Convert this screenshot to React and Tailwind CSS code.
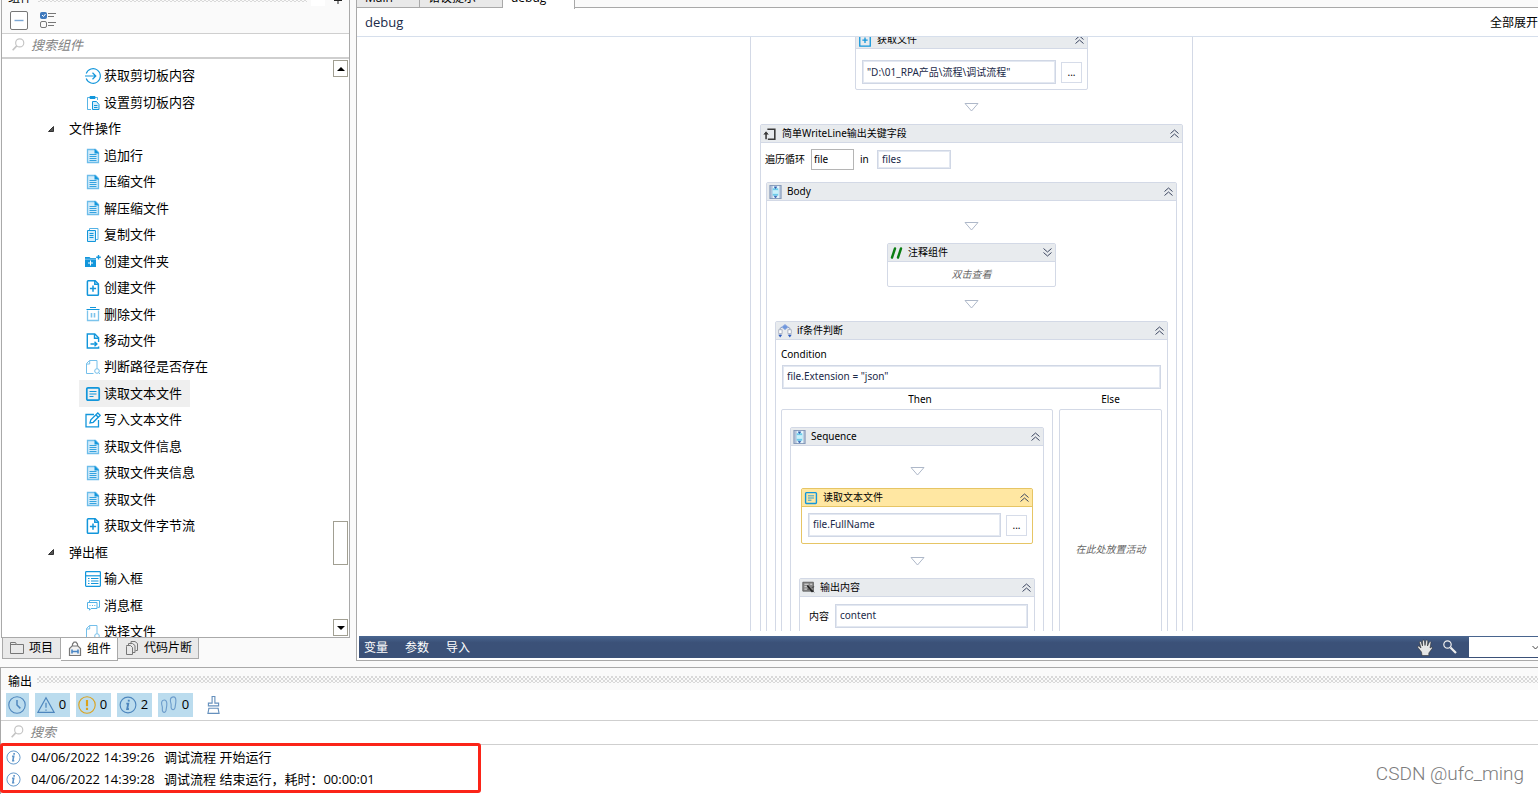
import { useState } from "react";
import { clsx } from "clsx";

const BLUE = "#1296db";

const Svg = ({ size = 16, children, ...rest }) => (
  <svg width={size} height={size} viewBox="0 0 16 16" fill="none" stroke={BLUE} aria-hidden="true" className="shrink-0" {...rest}>
    {children}
  </svg>
);

const icons = {
  arrowCircle: (
    <Svg>
      <path d="M1.2 5.5A7.3 7.3 0 1 1 1.2 10.5" strokeWidth="1.1" />
      <path d="M0 8h10.5M7.5 4.8 10.8 8 7.5 11.2" strokeWidth="1.2" />
    </Svg>
  ),
  paste: (
    <Svg>
      <path d="M6 14.5H2.5v-12H5M10 2.5h2.5V5" opacity="0.7" />
      <path d="M5 1.5h5v2H5z" fill={BLUE} />
      <path d="M7.5 6.5h4l2.5 3v5H7.5z" fill="#d5edfa" />
      <path d="M9 10.5h3.5M9 12.5h3.5" />
    </Svg>
  ),
  doc: (
    <Svg>
      <path d="M2.5 1.5h8l3 3v10h-11z" fill="#d3ecfa" stroke="#6dbdea" strokeWidth="1.3" />
      <path d="M9.5.8v4.700h4.700z" fill={BLUE} stroke="none" />
      <path d="M4.500 6.500h7M4.500 8.500h7M4.500 10.500h7M4.500 12.500h7" stroke="#35a3e0" />
    </Svg>
  ),
  copy: (
    <Svg>
      <path d="M4.5 3.5v-2h8.500v11h-2" stroke="#55b2e6" />
      <path d="M2.5 3.5h8v11h-8z" fill="#d3ecfa" />
      <path d="M4.5 6.5h4M4.5 8.5h4M4.5 10.5h4" />
    </Svg>
  ),
  folderPlus: (
    <Svg>
      <path d="M0 4h4.5l1 1H11v9H0z" fill={BLUE} stroke="none" />
      <path d="M0 6.2h11" stroke="#9dd3f2" strokeWidth="0.8" />
      <path d="M5.5 7.5v5M3 10h5" stroke="#fff" />
      <path d="M13.5 2v4.5M11.2 4.2h4.6" strokeWidth="1.4" />
    </Svg>
  ),
  docPlus: (
    <Svg strokeWidth="1.5">
      <path d="M3.2.8h7l3.2 3.2v10.4q0 .8-.8.8H3.2q-.8 0-.8-.8V1.600q0-.8.8-.8z" />
      <path d="M9.8 1v3.2h3.5" />
      <path d="M8 5.5v6.2M4.9 8.6h6.2" />
    </Svg>
  ),
  trash: (
    <Svg stroke="#7cc4ec">
      <path d="M5 1.5h6M1.5 3.500h13" stroke={BLUE} />
      <path d="M2.500 4.5v10h11v-10" strokeWidth="1.3" />
      <path d="M6.5 7v4.5M9.5 7v4.5" strokeWidth="1.6" />
    </Svg>
  ),
  docMove: (
    <Svg strokeWidth="1.4">
      <path d="M13.6 9V4.8L9.8 1H2.3v14h11.300v-1.5" />
      <path d="M9.5 1v4.2h4" />
      <path d="M5.5 11h6.2M9.5 8.7l2.4 2.3-2.4 2.3" />
    </Svg>
  ),
  docSearch: (
    <Svg stroke="#74bfea">
      <path d="M8.5 14.5h-7v-10l3-3h7.5v8M1.5 5h3.2V1.5" />
      <circle cx="12" cy="12" r="2.3" />
      <path d="m13.5 13.5 1.5 1.5" />
    </Svg>
  ),
  read: (
    <Svg>
      <rect x="1.8" y="1.8" width="12.4" height="12.4" rx="1.2" strokeWidth="1.7" />
      <path d="M4.5 5.5h7M4.5 8h7M4.5 10.5h4" />
    </Svg>
  ),
  write: (
    <Svg strokeWidth="1.3">
      <path d="M9 2.5H1v12.3h12.5V8" />
      <path d="m5 11 .8-3.2L12.8 1l2.4 2.3-7 7z" />
      <path d="m11 3 2.3 2.2" />
    </Svg>
  ),
  inputBox: (
    <Svg>
      <rect x=".6" y=".6" width="14.8" height="14.8" rx=".8" strokeWidth="1.2" />
      <path d="M.5 4.8h15" strokeWidth="1.2" />
      <path d="M3 7.5h1.5M3 10h1.5M3 12.5h1.5M6 7.5h7.5M6 10h7.5M6 12.5h7.5" />
    </Svg>
  ),
  message: (
    <Svg stroke="#55b2e6">
      <path d="M4.5 5V3.5h10v6.8h-2" />
      <path d="M2.5 5.5h9.5v6H6l-1.5 1.7v-1.7h-2z" fill="#fff" />
      <path d="M4.5 8.5h1M7 8.5h1M9.3 8.5h1" />
    </Svg>
  ),
};

const treeRows = [
  { label: "获取剪切板内容", icon: "arrowCircle" },
  { label: "设置剪切板内容", icon: "paste" },
  { label: "文件操作", group: true },
  { label: "追加行", icon: "doc" },
  { label: "压缩文件", icon: "doc" },
  { label: "解压缩文件", icon: "doc" },
  { label: "复制文件", icon: "copy" },
  { label: "创建文件夹", icon: "folderPlus" },
  { label: "创建文件", icon: "docPlus" },
  { label: "删除文件", icon: "trash" },
  { label: "移动文件", icon: "docMove" },
  { label: "判断路径是否存在", icon: "docSearch" },
  { label: "读取文本文件", icon: "read" },
  { label: "写入文本文件", icon: "write" },
  { label: "获取文件信息", icon: "doc" },
  { label: "获取文件夹信息", icon: "doc" },
  { label: "获取文件", icon: "doc" },
  { label: "获取文件字节流", icon: "docPlus" },
  { label: "弹出框", group: true },
  { label: "输入框", icon: "inputBox" },
  { label: "消息框", icon: "message" },
  { label: "选择文件", icon: "docSearch" },
];

const logs = [
  { time: "04/06/2022 14:39:26", text: "调试流程 开始运行" },
  { time: "04/06/2022 14:39:28", text: "调试流程 结束运行，耗时：00:00:01" },
];

const Grip = () => (
  <div className="h-[7px] flex-1 bg-[repeating-conic-gradient(#d9d9d9_0_25%,transparent_0_50%)] bg-[length:4px_4px]" />
);

const SearchBox = ({ label }) => (
  <div className="flex h-6 shrink-0 items-center gap-1.5 border-b border-[#cfcfcf] bg-white pb-0.5 pl-2.5">
    <Svg size={13} stroke="#c4c4c4" strokeWidth="1.4">
      <circle cx="9.5" cy="6" r="5" />
      <path d="M5.8 9.7.8 15" strokeWidth="2" />
    </Svg>
    <input
      type="text"
      aria-label={label}
      placeholder={label}
      className="min-w-0 flex-1 bg-transparent text-[13px] leading-5 italic outline-none placeholder:text-[#828282]"
    />
  </div>
);

const ScrollBar = () => (
  <div className="flex w-[15px] shrink-0 flex-col pt-px pb-px">
    <button type="button" aria-label="Scroll up" className="flex h-[17px] items-center justify-center border border-[#a19f92] bg-white">
      <svg width="8" height="4" viewBox="0 0 8 4"><path d="M4 0 8 4H0z" /></svg>
    </button>
    <div className="mt-auto mb-[54px] h-11 border border-[#a19f92] bg-white" />
    <button type="button" aria-label="Scroll down" className="flex h-[17px] items-center justify-center border border-[#a19f92] bg-white">
      <svg width="8" height="4" viewBox="0 0 8 4"><path d="M0 0h8L4 4z" /></svg>
    </button>
  </div>
);

const ComponentTree = () => {
  const [selected, setSelected] = useState("读取文本文件");

  return (
    <div className="flex min-h-0 flex-1 overflow-hidden border-t border-b border-t-[#cfcfcf] border-b-[#a9a9a9] bg-white pr-px">
      <ul className="-mb-2 flex min-w-0 flex-1 flex-col pt-1">
        {treeRows.map((row) => (
          <li key={row.label} className="flex min-h-[26px] flex-1 items-stretch">
            {row.group ? (
              <button type="button" className="ml-[45px] flex items-center gap-3.5 text-[13px]">
                <svg width="8" height="8" viewBox="0 0 8 8" className="shrink-0">
                  <path d="M6.500 1.500v5h-5z" fill="#555" stroke="#333" />
                </svg>
                {row.label}
              </button>
            ) : (
              <button
                type="button"
                onClick={() => setSelected(row.label)}
                className={clsx(
                  "ml-[77px] flex items-center gap-[3px] pr-2 pl-1.5 text-[13px]",
                  selected === row.label && "bg-[#efefef]"
                )}
              >
                {icons[row.icon]}
                {row.label}
              </button>
            )}
          </li>
        ))}
      </ul>
      <ScrollBar />
    </div>
  );
};

const SideTabs = () => (
  <div className="flex h-[23px] shrink-0 items-start text-xs">
    <button type="button" className="ml-px flex h-[21px] w-[59px] items-center gap-1 border border-t-0 border-[#a9a9a9] bg-[#e9e9e9] pl-1.5">
      <Svg stroke="#777">
        <path d="M1.5 2.5h5l1 2h7v9h-13zM1.5 4.5h6" />
      </Svg>
      项目
    </button>
    <button type="button" className="flex h-[23px] w-[57px] items-center gap-1 border border-t-0 border-l-0 border-[#a9a9a9] bg-white pl-1.5">
      <Svg stroke="#777" strokeWidth="1.2">
        <path d="M2.500 14.500V7.500L5 5h6l2.500 2.500v7z" fill="#f1f1f1" />
        <path d="M5.500 5V3L7 1.200h2L10.500 3v2M2 14.500h12" />
        <path d="M5 8.500v4M11 8.500v4M5 10.500h6" stroke="#4a86c5" strokeWidth="1.600" />
      </Svg>
      组件
    </button>
    <button type="button" className="flex h-[21px] w-[81px] items-center gap-1 border border-t-0 border-l-0 border-[#a9a9a9] bg-[#e9e9e9] pl-1.5">
      <Svg stroke="#777">
        <path d="M2.500 5.500h4l2 2v7h-6v-8z" />
        <path d="M4.500 5V3.500h4l2.500 2v7H9M7 3V1.500h4l2.500 2v7h-2" />
      </Svg>
      代码片断
    </button>
  </div>
);

const SidePanel = () => (
  <aside className="ml-px flex w-[349px] shrink-0 flex-col">
    <div className="flex min-h-0 flex-1 flex-col border-x border-[#a9a9a9]">
      <div className="-mt-3.5 flex h-6 shrink-0 items-center pr-1.5 pl-1.5 text-xs">
        <h2 className="pr-1.5">组件</h2>
        <Grip />
        <div className="mr-2 ml-1 h-4 w-3.5 bg-white" />
        <svg width="10" height="14" viewBox="0 0 10 14" stroke="#222" fill="none">
          <path d="M1 9.500h8M5 9.500V13M2.500 1v8M7.500 1v8" />
        </svg>
      </div>
      <div className="flex h-6 shrink-0 items-center gap-3 border-b border-[#cfcfcf] pb-0.5 pl-2">
        <button type="button" aria-label="Collapse all">
          <svg width="18" height="19" viewBox="0 0 18 19" fill="none">
            <rect x=".5" y=".5" width="17" height="18" rx="1.500" stroke="#777" fill="#fff" />
            <path d="M4.500 9.500h9" stroke="#7ba7d4" strokeWidth="1.400" />
          </svg>
        </button>
        <button type="button" aria-label="Show options">
          <svg width="16" height="17" viewBox="0 0 16 17" fill="none" stroke="#777">
            <rect x=".5" y=".5" width="6" height="6" rx="1" fill="#3f79bd" stroke="#3f79bd" />
            <path d="m2 3 1.500 1.500L5.500 2" stroke="#fff" />
            <rect x=".5" y="9.500" width="6" height="6" rx="1.500" />
            <path d="M8 1.500h8M8 4.500h6M8 10.500h8M8 13.500h6" />
          </svg>
        </button>
      </div>
      <SearchBox label="搜索组件" />
      <ComponentTree />
    </div>
    <SideTabs />
  </aside>
);

const Chevrons = ({ down }) => (
  <svg width="9" height="9" viewBox="0 0 9 9" fill="none" stroke="#3c4660" className={clsx(down && "rotate-180")}>
    <path d="M.5 4.500 4.500 1l4 3.500M.5 8.500 4.500 5l4 3.500" />
  </svg>
);

const Card = ({ title, icon, active, collapsed, className, children }) => (
  <section className={clsx("shrink-0 rounded-[2px] border bg-white", active ? "border-[#e6c565]" : "border-[#d3d9e6]", className)}>
    <header
      className={clsx(
        "flex h-[18px] items-center gap-[5px] border-b pr-[3px] pl-0.5",
        active ? "border-[#e6c565] bg-[#ffe7a2]" : "border-[#d3d9e6] bg-[#e8ebee]"
      )}
    >
      {icon}
      <h3 className="flex-1 pb-0.5 leading-4">{title}</h3>
      <button type="button" aria-label={collapsed ? "Expand" : "Collapse"}>
        <Chevrons down={collapsed} />
      </button>
    </header>
    {children}
  </section>
);

const Connector = ({ first }) => (
  <div className={clsx("flex shrink-0 justify-center pb-3", first ? "pt-[21px]" : "pt-[13px]")}>
    <svg width="15" height="9" viewBox="0 0 15 9" fill="#fff" stroke="#aeb8c9">
      <path d="M1 .5h13L7.500 8z" />
    </svg>
  </div>
);

const Field = ({ className, ...rest }) => (
  <input
    type="text"
    className={clsx(
      "min-w-0 border border-[#d0d7e5] bg-white pb-0.5 text-[#1b2a49] inset-ring inset-ring-[#e3e8f1] outline-none",
      className
    )}
    {...rest}
  />
);

const PathRow = ({ label, value, className }) => (
  <div className={clsx("flex items-center gap-[5px] pr-[5px] pl-1.5", className)}>
    <Field aria-label={label} defaultValue={value} className="h-6 flex-1 px-1" />
    <button type="button" aria-label="Browse" className="h-[21px] w-[21px] border border-[#d6dce9] bg-white">
      ...
    </button>
  </div>
);

const SequenceIcon = () => (
  <svg width="13" height="14" viewBox="0 0 13 15" fill="none" className="shrink-0">
    <rect x=".5" y=".5" width="12" height="14" fill="#b4c3da" stroke="#8296b8" />
    <path d="M3.500 1h7v13h-7z" fill="#e6f5fb" />
    <path d="M3.500 3.500h6v8h-6z" fill="#6ccbea" />
    <path d="M3.500 5.500h6v4h-6z" fill="#c9f0fa" />
    <path d="M5 2h3L6.500 4zM5 12h3l-1.500 2z" fill="#2c5ab0" stroke="#2c5ab0" strokeWidth=".5" />
  </svg>
);

const LoopIcon = () => (
  <Svg size={14} stroke="#3a3a3a" strokeWidth="1.800">
    <path d="M5 2.500h8.500v11.500H5.500M3.500 14V7" />
    <path d="M1 8.500 3.500 5.500 6 8.500" fill="#3a3a3a" strokeWidth="1" />
  </Svg>
);

const BranchIcon = () => (
  <Svg size={14} stroke="#7b8fb5">
    <path d="M5 4H2.500V12M11 4h2.500V12" strokeDasharray="2 1" />
    <path d="M8 .5 11.800 3.500 8 6.500 4.200 3.500z" fill="#6f97dc" stroke="#9db4e2" />
    <path d="M.8 6.500h3.900v4.500H.8zM11.300 6.500h3.900v4.500h-3.900z" fill="#fff" stroke="#a3acbd" />
    <path d="M.3 12.300h4.500L2.500 15.500zM11.200 12.300h4.500L13.500 15.500z" fill="#2e5cc0" stroke="none" />
  </Svg>
);

const WriteLineIcon = () => (
  <Svg size={13} stroke="#555">
    <path d="M1 1.500h13v11H1z" fill="#8a8a8a" />
    <path d="M3 4h5M3 7h4M3 10h3M10 4h2.500" stroke="#eee" />
    <path d="m6.500 5.500 6.500 8" stroke="#222" strokeWidth="2" />
    <path d="m7 11 2-2M12 8l3-1M12.500 11l2.500 3" stroke="#333" />
  </Svg>
);

const CommentIcon = () => (
  <svg width="13" height="12" viewBox="0 0 13 12" stroke="#0a7d12" strokeWidth="2.400" strokeLinecap="round" className="shrink-0">
    <path d="M2 10.500 5 1.500M8 10.500l3-9" />
  </svg>
);

const Canvas = () => (
  <div className="mb-[5px] flex min-h-0 flex-1 items-start justify-center overflow-hidden font-['Noto_Sans','Noto_Sans_CJK_SC',sans-serif] text-[10px]">
    <div className="flex flex-col items-center border-x border-[#d3d9e6] px-[9px]">
      <Card
        title="获取文件"
        icon={<Svg size={14} strokeWidth="1.500"><path d="M2 1h12v14H2zM8 5v6.500M5 8.200h6" /></Svg>}
        className="-mt-[7px] w-[233px]"
      >
        <PathRow label="路径" value={'"D:\\01_RPA产品\\流程\\调试流程"'} className="pt-[11px] pb-[5px]" />
      </Card>
      <Connector />
      <Card title="简单WriteLine输出关键字段" icon={<LoopIcon />}>
        <div className="flex items-center gap-1.5 pt-1.5 pr-1 pb-3 pl-1">
          <label htmlFor="loop-item">遍历循环</label>
          <input
            id="loop-item"
            type="text"
            defaultValue="file"
            className="h-[21px] w-[43px] border border-[#b5b5b5] bg-white px-0.5 pb-0.5 text-black outline-none"
          />
          <label htmlFor="loop-source" className="w-[11px]">in</label>
          <Field id="loop-source" defaultValue="files" className="h-[19px] w-[74px] px-1" />
        </div>
        <div className="px-[5px] pb-[5px]">
          <Card title="Body" icon={<SequenceIcon />}>
            <div className="flex flex-col items-center px-2 pb-4">
              <Connector first />
              <Card title="注释组件" icon={<CommentIcon />} collapsed className="w-[169px]">
                <p className="text-center leading-6 text-[#666] italic">双击查看</p>
              </Card>
              <Connector />
              <Card title="if条件判断" icon={<BranchIcon />}>
                <div className="flex flex-col px-[5px] pt-1.5 pb-[5px]">
                  <label htmlFor="condition" className="pb-[3px] leading-4">Condition</label>
                  <Field id="condition" defaultValue={'file.Extension = "json"'} className="mx-px h-6 px-1" />
                  <div className="flex gap-1.5">
                    <div className="flex flex-col">
                      <h4 className="pl-1.5 text-center leading-5">Then</h4>
                      <div className="rounded-[2px] border border-[#d3d9e6] px-2 py-[17px]">
                        <Card title="Sequence" icon={<SequenceIcon />} className="flex w-[254px] flex-col">
                          <div className="flex flex-col items-center">
                            <Connector first />
                            <Card title="读取文本文件" icon={<Svg size={14}><rect x="1.800" y="1.800" width="12.400" height="12.400" rx="1" strokeWidth="1.600" /><path d="M4.500 5.500h7M4.500 8h7M4.500 10.500h4" /></Svg>} active className="w-[232px]">
                              <PathRow label="文件" value="file.FullName" className="pt-1.5 pb-1.5" />
                            </Card>
                            <Connector />
                            <Card title="输出内容" icon={<WriteLineIcon />} className="w-[236px]">
                              <div className="flex items-center justify-end gap-1.5 pt-[7px] pr-1.5 pb-2">
                                <label htmlFor="output-content">内容</label>
                                <Field id="output-content" defaultValue="content" className="h-6 w-[193px] px-1" />
                              </div>
                            </Card>
                            <Connector />
                          </div>
                        </Card>
                      </div>
                    </div>
                    <div className="flex w-[103px] flex-col">
                      <h4 className="text-center leading-5">Else</h4>
                      <div className="flex flex-1 items-center justify-center rounded-[2px] border border-[#d3d9e6] text-[#666] italic">
                        在此处放置活动
                      </div>
                    </div>
                  </div>
                </div>
              </Card>
            </div>
          </Card>
        </div>
      </Card>
    </div>
  </div>
);

const EditorBar = () => (
  <div className="mb-0.5 ml-0.5 flex h-[22px] shrink-0 items-center gap-[17px] bg-linear-to-b from-[#4a6690] to-[#3b5178] to-30% pr-[43px] pl-[5px] text-xs text-white">
    <button type="button" className="pt-0.5">变量</button>
    <button type="button" className="pt-0.5">参数</button>
    <button type="button" className="pt-0.5">导入</button>
    <div className="ml-auto flex items-center gap-2.5">
      <button type="button" aria-label="Pan">
        <svg width="16" height="17" viewBox="0 0 16 17" fill="#e6e6e6" stroke="#333" strokeWidth=".6">
          <path d="M5 16.500 4.500 13 .8 8.500Q.3 7 1.800 7L4 9 2.500 3.500Q2.500 2 4 2.300L5.500 7 5.500 2Q6 .3 7.300 1.300L8 6.500 8.800 1.800Q9.800.3 10.800 1.800L10.500 7 12.300 3Q13.500 2 14 3.500L13 9 14.500 8Q15.500 8 15.200 9.500L11.800 14V16.500Z" />
        </svg>
      </button>
      <button type="button" aria-label="Zoom">
        <svg width="14" height="14" viewBox="0 0 14 14" fill="none" stroke="#eee">
          <circle cx="4.500" cy="4.500" r="3.700" strokeWidth="1.200" />
          <path d="m7.500 7.500 5.500 5.500" strokeWidth="2.200" />
        </svg>
      </button>
      <div className="relative ml-0.5">
        <select aria-label="Zoom level" className="block h-5 w-[74px] appearance-none bg-white text-black">
          <option value=""></option>
          <option value="100">100%</option>
        </select>
        <svg width="7" height="5" viewBox="0 0 7 5" fill="none" stroke="#444" className="pointer-events-none absolute top-2 right-1">
          <path d="m.5 1 3 3 3-3" />
        </svg>
      </div>
    </div>
  </div>
);

const Editor = () => (
  <main className="-mr-[49px] ml-1.5 flex min-w-0 flex-1 flex-col">
    <div className="-mt-3 flex h-5 shrink-0 items-start border-b border-[#a9a9a9] text-xs">
      <button type="button" className="h-[19px] w-16 border-x border-[#a9a9a9] bg-[#e9e9e9] pl-2 text-left">Main</button>
      <button type="button" className="h-[19px] w-[83px] border-r border-[#a9a9a9] bg-[#e9e9e9] pl-2 text-left">错误提示</button>
      <button type="button" className="relative h-[21px] w-[72px] border-r border-[#a9a9a9] bg-white pb-0.5 pl-2 text-left">debug</button>
    </div>
    <div className="flex min-h-0 flex-1 flex-col border-x border-b border-[#a9a9a9] bg-white">
      <div className="flex h-[29px] shrink-0 items-center justify-between border-b border-[#d6dfec] pt-0.5 pr-12 pl-2 text-xs">
        <span className="text-[13px] text-[#1b2a49]">debug</span>
        <button type="button">全部展开</button>
      </div>
      <Canvas />
      <EditorBar />
    </div>
  </main>
);

const FilterButton = ({ label, count, children }) => (
  <button type="button" aria-label={label} className="flex h-6 items-center gap-[3px] bg-[#bbdcee] pr-[3px] pl-0.5">
    {children}
    {count !== undefined && <span className="w-[9px] text-[13px]">{count}</span>}
  </button>
);

const InfoIcon = ({ size, stroke = "#5b93c9" }) => (
  <Svg size={size} stroke={stroke}>
    <circle cx="8" cy="8" r="7" />
    <path d="M6.500 6.800h1.700L7.300 11.500h1.500" strokeWidth="1.700" />
    <path d="M7.800 3.300h1.700v1.700H7.800z" fill={stroke} stroke="none" />
  </Svg>
);

const OutputPanel = () => (
  <section className="relative mt-1.5 shrink-0 border-t border-l border-[#a9a9a9] bg-white pb-px">
    <header className="flex h-[22px] items-center bg-[#fafafa] pl-[7px] text-xs">
      <h2 className="pt-1.5 pr-[5px]">输出</h2>
      <Grip />
    </header>
    <div className="flex h-[31px] items-center gap-1.5 border-b border-[#cfcfcf] pl-[5px]">
      <FilterButton label="Time">
        <Svg size={18} stroke="#4d86bd">
          <circle cx="8" cy="8" r="7.300" />
          <path d="M8 3.500V8l3 3" strokeWidth="1.300" />
        </Svg>
      </FilterButton>
      <FilterButton label="Errors" count={0}>
        <Svg size={18} stroke="#4d86bd">
          <path d="M8 1.500 15.200 14.500H.8zM8 6v4.500M8 12v1.200" strokeWidth="1.100" />
        </Svg>
      </FilterButton>
      <FilterButton label="Warnings" count={0}>
        <Svg size={18} stroke="#dba21c">
          <circle cx="8" cy="8" r="7.300" />
          <path d="M8 3.500v5.500M8 10.500v2" strokeWidth="1.900" />
        </Svg>
      </FilterButton>
      <FilterButton label="Information" count={2}>
        <InfoIcon size={18} stroke="#4d86bd" />
      </FilterButton>
      <FilterButton label="Trace" count={0}>
        <Svg size={18} stroke="#6c9ccb">
          <path d="M3.700 3.500C1 3.500 1 6.500 2 9.500c.4 1.500-.3 2.500.3 4 .5 1.500 2.500 1.500 3-.5C5.700 10.500 7.500 3.500 3.700 3.500z" />
          <path d="M12 .8C8.800.8 8.800 4 9.800 7c.4 1.500-.3 2.500.3 4 .5 1.500 2.700 1.500 3.200-.5C13.700 8 15.500.8 12 .8z" />
        </Svg>
      </FilterButton>
      <button type="button" aria-label="Clear" className="ml-2">
        <svg width="13" height="20" viewBox="0 0 14 20" fill="none" stroke="#6590bd">
          <path d="M5.500 8V.8h3V8h4v3H1.500V8zM1.500 13.500h11M2 14l-1 5h12l-1-5" strokeWidth="1.200" />
        </svg>
      </button>
    </div>
    <SearchBox label="搜索" />
    <ul className="relative -mt-0.5 -ml-px w-[481px] rounded-[3px] border-3 border-[#fb2418] bg-white">
      {logs.map((log) => (
        <li key={log.time} className="flex h-[22px] items-center pl-[3px] text-[13px] leading-5">
          <InfoIcon size={15} />
          <time className="ml-2.5 w-[133px] whitespace-nowrap">{log.time}</time>
          <span>{log.text}</span>
        </li>
      ))}
    </ul>
    <p className="absolute right-3.5 bottom-1.5 font-['Roboto'] text-[19px] leading-7 font-light text-[#7c7c7c]">CSDN @ufc_ming</p>
  </section>
);

const App = () => (
  <div className="flex h-screen flex-col overflow-hidden bg-[#fafafa] font-['Open_Sans','Noto_Sans_CJK_SC',sans-serif] text-black">
    <div className="flex min-h-0 flex-1">
      <SidePanel />
      <Editor />
    </div>
    <OutputPanel />
  </div>
);

export default App;
